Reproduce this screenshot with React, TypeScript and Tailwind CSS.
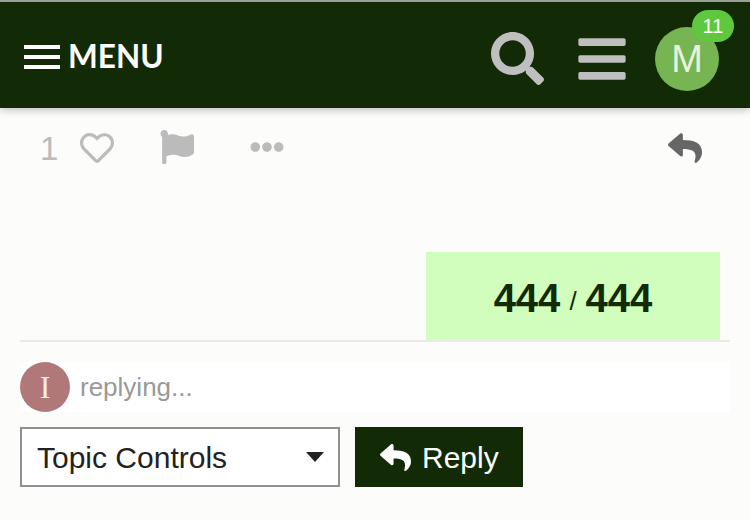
import { FaRegHeart, FaFlag, FaEllipsisH, FaReply, FaSearch, FaBars } from "react-icons/fa";

export default function App() {
  return (
    <div className="h-[520px] w-[750px] overflow-hidden bg-[#fcfcfa] font-['Liberation_Sans',sans-serif]">
      {/* HEADER */}
      <header className="relative z-10 flex h-[108px] items-center justify-between border-t-2 border-[#9a9f97] bg-[#132a07] pl-6 pr-[31px] shadow-[0_2px_8px_rgba(0,0,0,0.25)]">
        <div className="flex items-center gap-2 pt-1">
          <div className="flex h-6 w-9 flex-col justify-between">
            <div className="h-1 bg-white" />
            <div className="h-1 bg-white" />
            <div className="h-1 bg-white" />
          </div>
          <span className="font-['Lato',sans-serif] text-[31.5px] leading-none font-bold text-white">MENU</span>
        </div>

        <div className="flex items-center pt-2">
          <FaSearch size={53} className="mb-[2px] text-[#bfbfbf]" />
          <FaBars size={54} className="ml-[31px] text-[#bfbfbf]" />
          <div className="relative ml-[26px] flex h-16 w-16 items-center justify-center rounded-full bg-[#76b551] text-[38px] text-[#e6f3df]">
            M
            <span className="absolute top-[-17px] right-[-15px] flex h-8 w-[42px] items-center justify-center rounded-full bg-[#5fc83f] text-[20px] text-white">
              11
            </span>
          </div>
        </div>
      </header>

      {/* POST ACTIONS */}
      <div className="flex h-[80px] items-center justify-between pr-12 pl-10">
        <div className="flex items-center">
          <span className="w-10 text-[33px] leading-none text-[#bbbbbb]">1</span>
          <FaRegHeart size={34} className="text-[#bbbbbb]" />
          <FaFlag size={34} className="mb-[2px] ml-[46px] text-[#bbbbbb]" />
          <FaEllipsisH size={34} className="mb-[3px] ml-[56px] text-[#bbbbbb]" />
        </div>
        <FaReply size={34} className="text-[#666666]" />
      </div>

      {/* PROGRESS */}
      <div className="mt-[64px] mr-5 ml-5 flex justify-end border-b-2 border-[#e9e9e7] pr-[10px]">
        <div className="flex h-[88px] w-[294px] items-center justify-center gap-[9px] bg-[#d1fdbd] pt-1 text-[#132a07]">
          <span className="text-[40px] leading-none font-bold">444</span>
          <span className="pt-[6px] text-[26px] leading-none">/</span>
          <span className="text-[40px] leading-none font-bold">444</span>
        </div>
      </div>

      {/* REPLY STATE */}
      <div className="mx-5 mt-5 flex h-[50px] items-center bg-white">
        <div className="flex h-[50px] w-[50px] items-center justify-center rounded-full bg-[#b07878] font-['Liberation_Serif',serif] text-[32px] text-[#f6ebeb]">
          I
        </div>
        <span className="ml-[10px] text-[26px] text-[#999999]">replying...</span>
      </div>

      {/* CONTROLS */}
      <div className="mt-[15px] ml-5 flex items-center gap-[15px]">
        <div className="flex h-[60px] w-[320px] items-center justify-between border-2 border-[#8f8f8f] bg-white pr-[14px] pl-[15px] text-[30px] text-[#222222]">
          <span>Topic Controls</span>
          <div className="h-0 w-0 border-x-[9px] border-t-[10px] border-x-transparent border-t-[#222222]" />
        </div>
        <button className="flex h-[60px] w-[168px] items-center gap-[11px] bg-[#132a07] pl-[25px] text-[30px] text-white">
          <FaReply size={31} />
          Reply
        </button>
      </div>
    </div>
  );
}
